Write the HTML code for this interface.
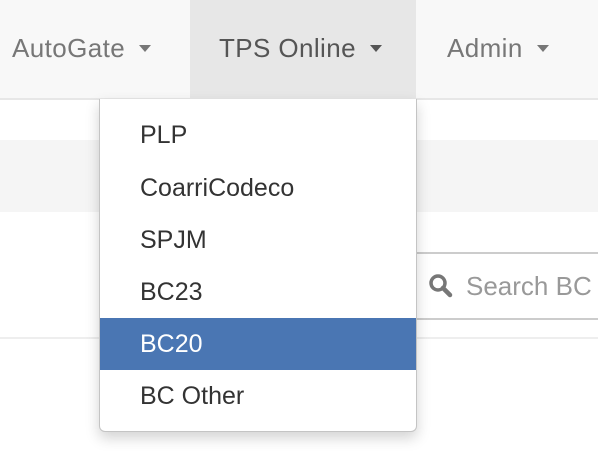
<!DOCTYPE html>
<html><head><style>
body{margin:0;width:598px;height:451px;overflow:hidden;background:#fff;font-family:"Liberation Sans",sans-serif;position:relative}
.nav{position:absolute;left:0;top:0;width:598px;height:98px;background:#f8f8f8;border-bottom:2px solid #e7e7e7}
.ni{position:absolute;top:0;height:98px;line-height:96px;font-size:26px;letter-spacing:0.4px;color:#777}
.caret{display:inline-block;width:0;height:0;border-left:6px solid transparent;border-right:6px solid transparent;border-top:7px solid #777;vertical-align:middle;margin-left:14px;margin-top:-3px}
.band{position:absolute;left:0;top:140px;width:598px;height:72px;background:#f5f5f5}
.search{position:absolute;left:380px;top:252px;width:240px;height:64px;border-top:2px solid #ccc;border-bottom:2px solid #ccc;background:#fff}
.hr{position:absolute;left:0;top:337px;width:598px;height:2px;background:#eee}
.dd{position:absolute;left:99px;top:99px;width:316px;height:332px;background:#fff;border:1px solid #c4c4c4;border-top:none;border-radius:0 0 6px 6px;box-shadow:0 6px 14px rgba(0,0,0,.18);}
.it{position:absolute;left:0;width:316px;height:52px;line-height:52px;padding-left:40px;box-sizing:border-box;font-size:25px;color:#333}
.act{background:#4a76b3;color:#fff}
</style></head><body>
<div class="nav">
<div class="ni" style="left:12px">AutoGate<span class="caret"></span></div>
<div class="ni" style="left:190px;width:226px;background:#e7e7e7;color:#555;padding-left:29px;box-sizing:border-box">TPS Online<span class="caret" style="border-top-color:#555"></span></div>
<div class="ni" style="left:447px">Admin<span class="caret"></span></div>
</div>
<div class="band"></div>
<div class="search">
<svg style="position:absolute;left:48px;top:19px" width="26" height="26" viewBox="0 0 26 26"><circle cx="10" cy="10" r="7" fill="none" stroke="#777" stroke-width="3.5"/><path d="M15 15 L22 22" stroke="#777" stroke-width="4.5" stroke-linecap="round"/></svg>
<span style="position:absolute;left:86px;top:0;line-height:64px;font-size:26px;color:#999">Search BC</span>
</div>
<div class="hr"></div>
<div class="dd">
<div class="it" style="top:10px">PLP</div>
<div class="it" style="top:63px">CoarriCodeco</div>
<div class="it" style="top:115px">SPJM</div>
<div class="it" style="top:167px">BC23</div>
<div class="it act" style="top:219px">BC20</div>
<div class="it" style="top:271px">BC Other</div>
</div>
</body></html>
